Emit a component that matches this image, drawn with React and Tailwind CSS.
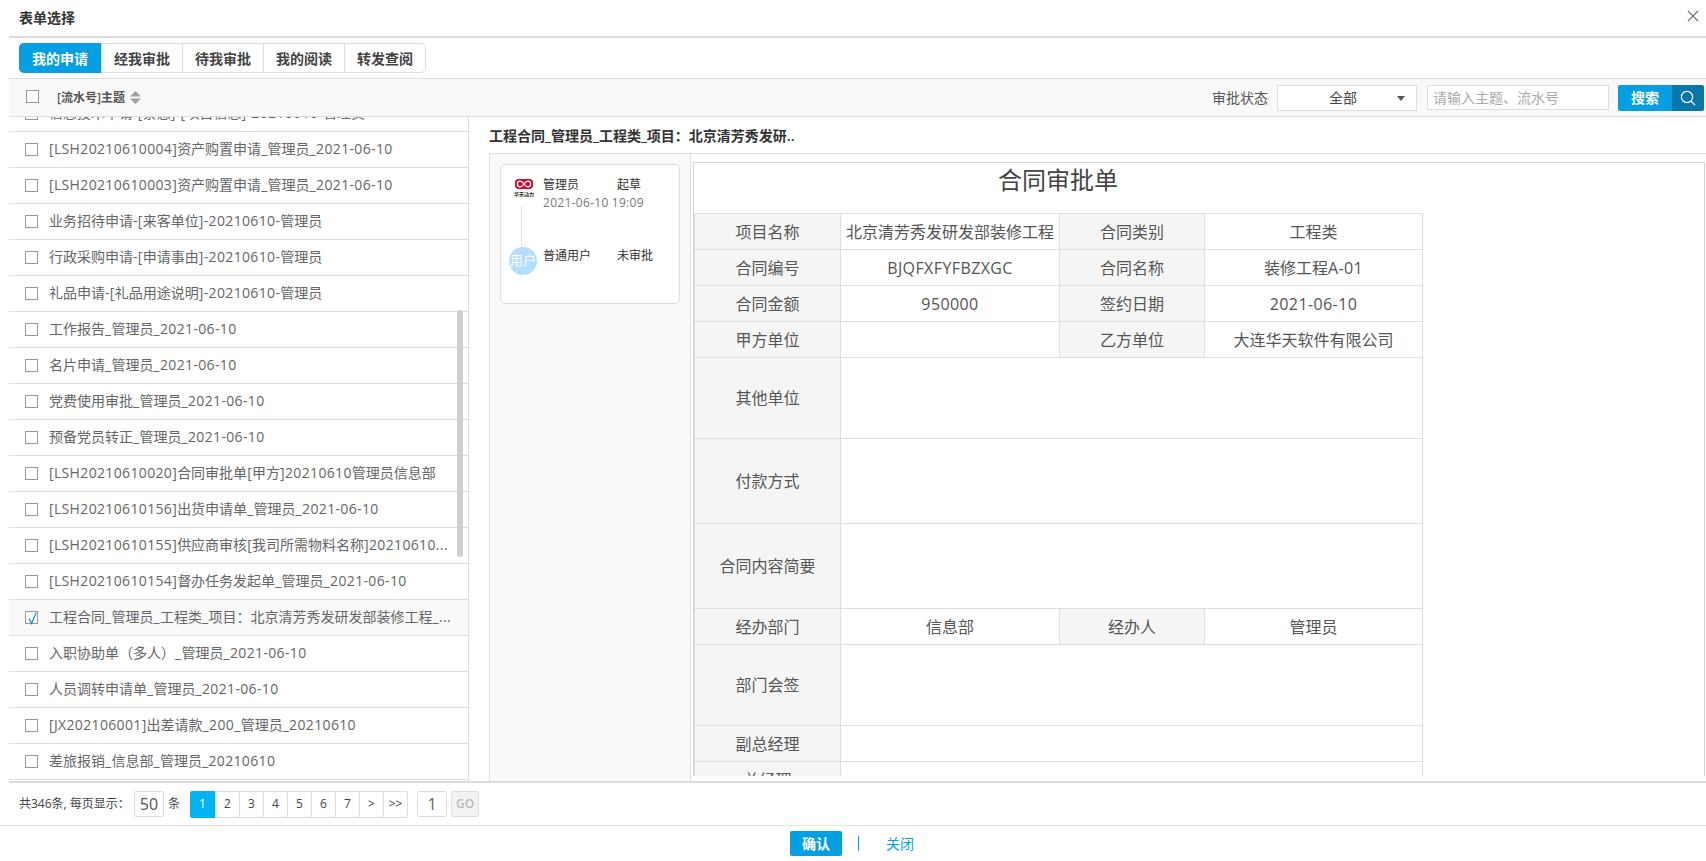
const TABS = ["我的申请", "经我审批", "待我审批", "我的阅读", "转发查阅"];

const ROWS = [
  "[LSH20210610004]资产购置申请_管理员_2021-06-10",
  "[LSH20210610003]资产购置申请_管理员_2021-06-10",
  "业务招待申请-[来客单位]-20210610-管理员",
  "行政采购申请-[申请事由]-20210610-管理员",
  "礼品申请-[礼品用途说明]-20210610-管理员",
  "工作报告_管理员_2021-06-10",
  "名片申请_管理员_2021-06-10",
  "党费使用审批_管理员_2021-06-10",
  "预备党员转正_管理员_2021-06-10",
  "[LSH20210610020]合同审批单[甲方]20210610管理员信息部",
  "[LSH20210610156]出货申请单_管理员_2021-06-10",
  "[LSH20210610155]供应商审核[我司所需物料名称]20210610...",
  "[LSH20210610154]督办任务发起单_管理员_2021-06-10",
  "工程合同_管理员_工程类_项目：北京清芳秀发研发部装修工程_...",
  "入职协助单（多人）_管理员_2021-06-10",
  "人员调转申请单_管理员_2021-06-10",
  "[JX202106001]出差请款_200_管理员_20210610",
  "差旅报销_信息部_管理员_20210610",
];

const PAGES = ["1", "2", "3", "4", "5", "6", "7", ">", ">>"];

// latin runs sit a bit wider than the installed font gives
function Txt({ children }) {
  if (!children) return null;
  return children.split(/([\x21-\x7e]+)/).map((part, i) =>
    i % 2 ? (
      <span key={i} className="tracking-[0.025em]">
        {part}
      </span>
    ) : (
      part
    )
  );
}

function Checkbox({ checked }) {
  return (
    <span className="relative w-[13px] h-[13px] border border-[#999] bg-white shrink-0">
      {checked && (
        <svg className="absolute left-[1px] -top-[1px] w-[11px] h-[14px]" viewBox="0 0 11 14" fill="none">
          <path d="M2 7.5 L4.6 12.5 L9.2 1.5" stroke="#0b8fdc" strokeWidth="1.2" />
        </svg>
      )}
    </span>
  );
}

function ListRow({ text, selected }) {
  return (
    <div className={"h-9 shrink-0 flex items-center pl-[16px] border-b border-[#dedede] " + (selected ? "bg-[#f9f9f9]" : "bg-white")}>
      <Checkbox checked={selected} />
      <span className="ml-[11px] text-[14px] text-[#666] whitespace-nowrap -mt-[2px]">
        <Txt>{text}</Txt>
      </span>
    </div>
  );
}

function Logo() {
  return (
    <div className="w-[26px] mt-[3px] flex flex-col items-center shrink-0">
      <svg className="w-[18px] h-[10px]" viewBox="0 0 20 11">
        <rect width="20" height="11" rx="4" fill="#d7062a" />
        <path
          d="M10 5.5 C8.5 3.2 7 2.4 5.5 2.4 C3.8 2.4 2.6 3.8 2.6 5.5 C2.6 7.2 3.8 8.6 5.5 8.6 C7 8.6 8.5 7.8 10 5.5 C11.5 3.2 13 2.4 14.5 2.4 C16.2 2.4 17.4 3.8 17.4 5.5 C17.4 7.2 16.2 8.6 14.5 8.6 C13 8.6 11.5 7.8 10 5.5 Z"
          fill="none"
          stroke="#fff"
          strokeWidth="1.4"
        />
      </svg>
      <span className="text-[5px] leading-[7px] mt-[2px] font-bold text-[#222] whitespace-nowrap">华天动力</span>
    </div>
  );
}

function FlowCard() {
  return (
    <div className="w-[180px] h-[140px] bg-white border border-[#dedede] rounded-[5px] relative pl-[10px] pt-[11px]">
      <div className="flex">
        <Logo />
        <div className="ml-[6px] text-[12px] leading-[18px]">
          <div className="flex text-[#333]">
            <span className="w-[74px]">管理员</span>
            <span>起草</span>
          </div>
          <div className="text-[#777]">
            <Txt>2021-06-10 19:09</Txt>
          </div>
        </div>
      </div>
      <div className="absolute left-[20px] top-[42px] h-[40px] border-l border-dotted border-[#ccc]" />
      <div className="flex mt-[35px]">
        <div className="w-[28px] h-[28px] -ml-[2px] rounded-full bg-[#b3deff] text-white text-[13px] flex items-center justify-center shrink-0">
          用户
        </div>
        <div className="ml-[6px] flex text-[12px] leading-[18px] text-[#333]">
          <span className="w-[74px]">普通用户</span>
          <span>未审批</span>
        </div>
      </div>
    </div>
  );
}

function Label({ children }) {
  return <td className="bg-[#f5f5f5] border border-[#dedede] text-center text-[#555]">{children}</td>;
}

function Val({ children, span }) {
  return (
    <td colSpan={span} className="border border-[#dedede] text-center text-[#555] whitespace-nowrap overflow-hidden">
      <Txt>{children}</Txt>
    </td>
  );
}

function ContractForm() {
  return (
    <div className="flex-1 h-full border border-[#d4d4d4] border-b-0 overflow-hidden">
      <div className="w-[728px] h-[50px] text-center text-[24px] leading-[34px] text-[#444]">合同审批单</div>
      <table className="w-[728px] table-fixed border-collapse text-[16px]">
        <colgroup>
          <col className="w-[146px]" />
          <col className="w-[219px]" />
          <col className="w-[145px]" />
          <col className="w-[218px]" />
        </colgroup>
        <tbody>
          <tr className="h-9">
            <Label>项目名称</Label>
            <Val>北京清芳秀发研发部装修工程</Val>
            <Label>合同类别</Label>
            <Val>工程类</Val>
          </tr>
          <tr className="h-9">
            <Label>合同编号</Label>
            <Val>BJQFXFYFBZXGC</Val>
            <Label>合同名称</Label>
            <Val>装修工程A-01</Val>
          </tr>
          <tr className="h-9">
            <Label>合同金额</Label>
            <Val>950000</Val>
            <Label>签约日期</Label>
            <Val>2021-06-10</Val>
          </tr>
          <tr className="h-9">
            <Label>甲方单位</Label>
            <Val></Val>
            <Label>乙方单位</Label>
            <Val>大连华天软件有限公司</Val>
          </tr>
          <tr className="h-[81px]">
            <Label>其他单位</Label>
            <Val span={3}></Val>
          </tr>
          <tr className="h-[85px]">
            <Label>付款方式</Label>
            <Val span={3}></Val>
          </tr>
          <tr className="h-[85px]">
            <Label>合同内容简要</Label>
            <Val span={3}></Val>
          </tr>
          <tr className="h-9">
            <Label>经办部门</Label>
            <Val>信息部</Val>
            <Label>经办人</Label>
            <Val>管理员</Val>
          </tr>
          <tr className="h-[81px]">
            <Label>部门会签</Label>
            <Val span={3}></Val>
          </tr>
          <tr className="h-9">
            <Label>副总经理</Label>
            <Val span={3}></Val>
          </tr>
          <tr className="h-9">
            <Label>总经理</Label>
            <Val span={3}></Val>
          </tr>
        </tbody>
      </table>
    </div>
  );
}

function Pager() {
  return (
    <div className="h-[43px] border-b border-[#e2e2e2] flex items-center pl-[19px] text-[12px] text-[#444] shrink-0">
      <span className="w-[110px] whitespace-nowrap">共346条, 每页显示：</span>
      <span className="ml-[5px] w-[30px] h-[26px] border border-[#dedede] rounded-[2px] flex items-center justify-center text-[16px] text-[#555]">50</span>
      <span className="ml-[4px] w-[12px] text-[12px]">条</span>
      <div className="ml-[10px] flex border border-[#dedede] rounded-[2px] h-[27px]">
        {PAGES.map((p, i) => (
          <span
            key={p}
            className={
              "w-6 flex items-center justify-center text-[12px] " +
              (i === 0 ? "bg-[#04b4f2] text-white -my-[1px] -ml-[1px] w-[25px] rounded-l-[2px]" : "border-l border-[#dedede] text-[#444]")
            }
          >
            {p}
          </span>
        ))}
      </div>
      <span className="ml-[9px] w-[30px] h-[26px] border border-[#dedede] rounded-[2px] flex items-center justify-center text-[16px] text-[#666]">1</span>
      <span className="ml-[4px] w-[28px] h-[26px] border border-[#dedede] bg-[#f2f2f2] rounded-[2px] flex items-center justify-center text-[12px] font-semibold text-[#bbb]">GO</span>
    </div>
  );
}

export default function App() {
  return (
    <div className="w-[1706px] h-[861px] overflow-hidden bg-white flex flex-col font-['Open_Sans','Noto_Sans_CJK_SC',sans-serif]">
      {/* dialog title */}
      <div className="h-[38px] ml-[9px] border-b-2 border-[#dcdcdc] flex items-center justify-between pl-[10px] pr-[6px] shrink-0">
        <span className="text-[14px] font-semibold text-[#333] -mt-[2px]">表单选择</span>
        <svg className="w-3.5 h-3.5 -mt-[4px]" viewBox="0 0 14 14" stroke="#777" strokeWidth="1.3">
          <path d="M2 2 L12 12 M12 2 L2 12" />
        </svg>
      </div>

      {/* tabs */}
      <div className="h-[40px] pl-[19px] pt-[5px] shrink-0">
        <div className="inline-flex h-[30px] border border-[#dedede] rounded-[5px]">
          {TABS.map((t, i) => (
            <span
              key={t}
              className={
                "flex items-center justify-center text-[14px] font-semibold " +
                (i === 0 ? "w-[82px] bg-[#049fe2] text-white rounded-l-[5px] -my-[1px] -ml-[1px]" : "w-[81px] border-l border-[#dedede] text-[#444]")
              }
            >
              {t}
            </span>
          ))}
        </div>
      </div>

      {/* filter bar */}
      <div className="h-[39px] ml-[9px] bg-[#f9f9f9] border-y border-[#dedede] flex items-center shrink-0">
        <span className="ml-[17px] -mt-[2px] w-[13px] h-[13px] border border-[#999] bg-white" />
        <span className="ml-[18px] text-[12px] font-semibold text-[#555]">[流水号]主题</span>
        <svg className="ml-[5px] w-[11px] h-[13px]" viewBox="0 0 11 13" fill="#a0a0a0">
          <path d="M5.5 0 L11 5.5 H0 Z M5.5 13 L11 7.5 H0 Z" />
        </svg>
        <span className="ml-auto text-[14px] text-[#555]">审批状态</span>
        <div className="ml-[9px] w-[140px] h-[26px] border border-[#dedede] bg-white flex items-center relative">
          <span className="ml-[51px] text-[14px] text-[#444]">全部</span>
          <span className="absolute right-[11px] top-[10px] border-x-[4px] border-x-transparent border-t-[5px] border-t-[#555]" />
        </div>
        <div className="ml-[10px] w-[182px] h-[25px] border border-[#dedede] bg-white flex items-center pl-[5px] text-[14px] text-[#aaa]">
          请输入主题、流水号
        </div>
        <div className="ml-[9px] mr-[2px] flex h-[26px] rounded-[2px] overflow-hidden">
          <span className="w-[54px] bg-[#049fe2] text-white text-[14px] font-semibold flex items-center justify-center">搜索</span>
          <span className="w-[32px] bg-[#0876ab] flex items-center justify-center">
            <svg className="w-4 h-4" viewBox="0 0 16 16" fill="none" stroke="#fff" strokeWidth="1.2">
              <circle cx="7" cy="7" r="5.6" />
              <path d="M11 11 L15 15" />
            </svg>
          </span>
        </div>
      </div>

      {/* body */}
      <div className="h-[666px] ml-[9px] flex border-b-2 border-[#dcdcdc] shrink-0">
        <div className="w-[460px] relative border-r border-[#dedede] overflow-hidden shrink-0">
          <div className="-mt-[21px] flex flex-col">
            <ListRow text="信息技术申请-[紧急]-[项目信息]-20210610-管理员" />
            {ROWS.map((r, i) => (
              <ListRow key={r} text={r} selected={i === 13} />
            ))}
          </div>
          <div className="absolute left-[448px] top-[193px] w-[6px] h-[247px] rounded-[3px] bg-[#cfcfcf]" />
        </div>

        <div className="flex-1 min-w-0 flex flex-col pl-[20px]">
          <div className="h-[36px] flex items-center text-[14px] font-semibold text-[#333] shrink-0">
            工程合同_管理员_工程类_项目：北京清芳秀发研..
          </div>
          <div className="flex-1 min-h-0 flex border-t border-l border-[#dedede]">
            <div className="w-[201px] h-full bg-[#f9f9f9] border-r border-[#dedede] pl-[10px] pt-[10px] shrink-0">
              <FlowCard />
            </div>
            <div className="flex-1 min-w-0 pl-[2px] pt-[8px] pr-[1px] pb-[5px]">
              <ContractForm />
            </div>
          </div>
        </div>
      </div>

      <Pager />

      {/* footer buttons */}
      <div className="flex-1 flex items-center justify-center pr-[2px]">
        <span className="w-[52px] h-[25px] bg-[#049fe2] rounded-[2px] text-white text-[14px] font-semibold flex items-center justify-center">确认</span>
        <span className="ml-[16px] w-px h-[15px] bg-[#049fe2]" />
        <span className="ml-[27px] text-[14px] text-[#049fe2]">关闭</span>
      </div>
    </div>
  );
}
